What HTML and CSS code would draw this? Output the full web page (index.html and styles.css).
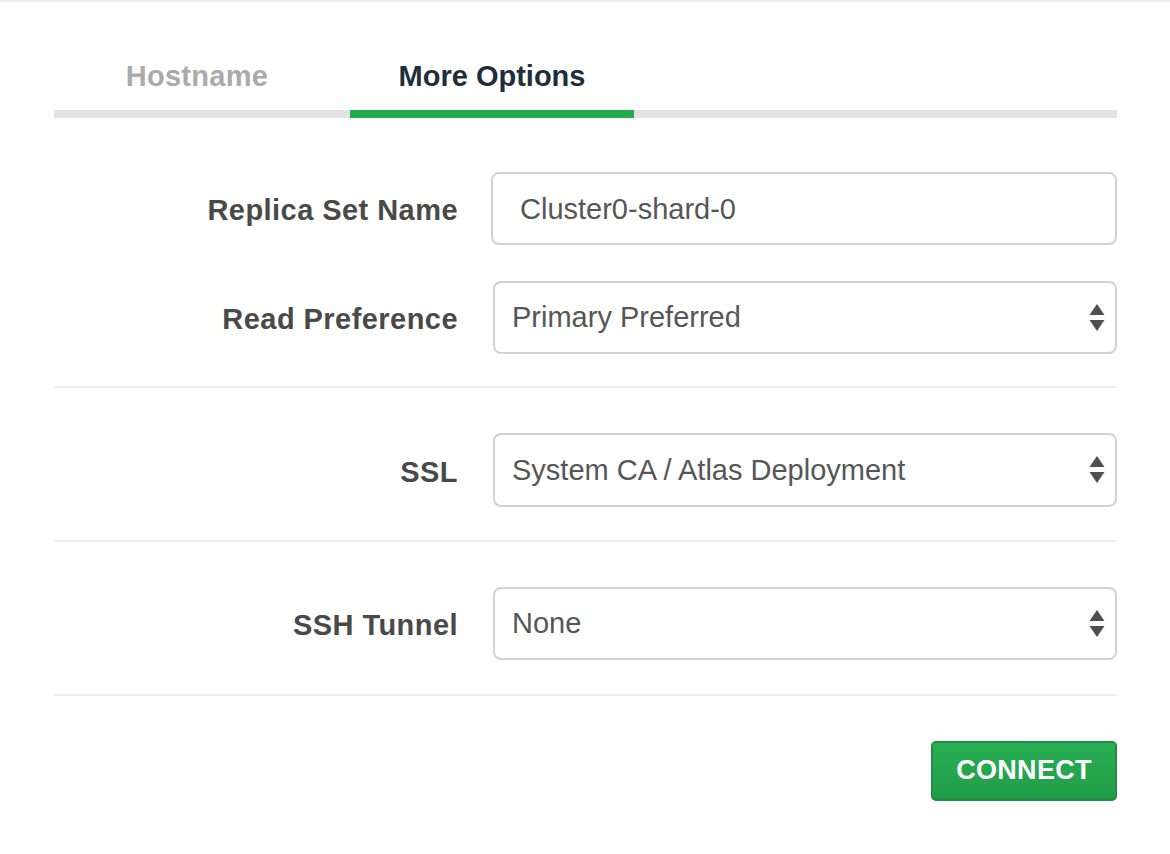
FILE: index.html
```html
<!DOCTYPE html>
<html>
<head>
<meta charset="utf-8">
<link rel="stylesheet" href="styles.css">
</head>
<body>
<div class="page">
  <div class="tabs">
    <div class="tab tab-host">Hostname</div>
    <div class="tab tab-more active">More Options</div>
    <div class="tab-fill"></div>
  </div>

  <div class="section section-first">
    <div class="row">
      <label class="label">Replica Set Name</label>
      <div class="field input">Cluster0-shard-0</div>
    </div>
    <div class="row">
      <label class="label">Read Preference</label>
      <div class="field select">
        <span>Primary Preferred</span>
        <svg class="arrows" width="16" height="28" viewBox="0 0 16 28"><path d="M8 0 L15.5 11 L0.5 11 Z" fill="#4f4f4f"/><path d="M0.5 16 L15.5 16 L8 27 Z" fill="#4f4f4f"/></svg>
      </div>
    </div>
  </div>

  <div class="section">
    <div class="row">
      <label class="label">SSL</label>
      <div class="field select tall">
        <span>System CA / Atlas Deployment</span>
        <svg class="arrows" width="16" height="28" viewBox="0 0 16 28"><path d="M8 0 L15.5 11 L0.5 11 Z" fill="#4f4f4f"/><path d="M0.5 16 L15.5 16 L8 27 Z" fill="#4f4f4f"/></svg>
      </div>
    </div>
  </div>

  <div class="section section-last">
    <div class="row">
      <label class="label">SSH Tunnel</label>
      <div class="field select">
        <span>None</span>
        <svg class="arrows" width="16" height="28" viewBox="0 0 16 28"><path d="M8 0 L15.5 11 L0.5 11 Z" fill="#4f4f4f"/><path d="M0.5 16 L15.5 16 L8 27 Z" fill="#4f4f4f"/></svg>
      </div>
    </div>
  </div>

  <div class="actions">
    <button class="connect">CONNECT</button>
  </div>
</div>
</body>
</html>
```

FILE: styles.css
```css
* { box-sizing: border-box; }

html, body {
  margin: 0;
  padding: 0;
  background: #ffffff;
}

body {
  font-family: "Liberation Sans", Arial, Helvetica, sans-serif;
  border-top: 2px solid #efefef;
  height: 854px;
}

.page {
  padding: 0 53px 0 54px;
}

.tabs {
  display: flex;
  padding-top: 57px;
}

.tab {
  font-size: 29px;
  font-weight: bold;
  line-height: 34px;
  padding-bottom: 17px;
  border-bottom: 8px solid #e3e3e3;
  color: #aaaaaa;
  text-align: center;
}

.tab-host {
  width: 296px;
  padding-right: 10px;
  letter-spacing: 0.3px;
}

.tab-more {
  width: 284px;
}

.tab.active {
  color: #1f2e3b;
  border-bottom-color: #24ad50;
}

.tab-fill {
  flex: 1;
  border-bottom: 8px solid #e3e3e3;
}

.section {
  display: flex;
  flex-direction: column;
  gap: 36px;
  padding: 45px 0 33px;
  border-bottom: 2px solid #eeeeee;
}

.section-first {
  padding-top: 54px;
  padding-bottom: 32px;
}

.section-last {
  padding-bottom: 34px;
}

.row {
  display: flex;
  align-items: center;
  gap: 33px;
}

.label {
  width: 404px;
  flex: none;
  text-align: right;
  font-size: 29px;
  line-height: 38px;
  padding-top: 3px;
  font-weight: bold;
  color: #494949;
  letter-spacing: 0.45px;
}

.field {
  flex: 1;
  height: 73px;
  border: 2px solid #d2d2d2;
  border-radius: 8px;
  font-size: 29px;
  color: #565656;
  display: flex;
  align-items: center;
}

.input {
  padding-left: 27px;
  padding-top: 2px;
}

.select {
  margin-left: 2px;
  padding-left: 17px;
  padding-right: 10px;
  justify-content: space-between;
}

.select.tall {
  height: 74px;
}

.arrows {
  display: block;
  flex: none;
}

.actions {
  display: flex;
  justify-content: flex-end;
  padding-top: 45px;
}

.connect {
  width: 186px;
  height: 60px;
  border: 2px solid #1f8f43;
  border-bottom-width: 3px;
  border-radius: 5px;
  background: linear-gradient(#27af53, #229c49);
  color: #ffffff;
  font-family: "Liberation Sans", Arial, Helvetica, sans-serif;
  font-size: 27px;
  font-weight: bold;
  padding: 0;
  letter-spacing: 0.3px;
}
```
